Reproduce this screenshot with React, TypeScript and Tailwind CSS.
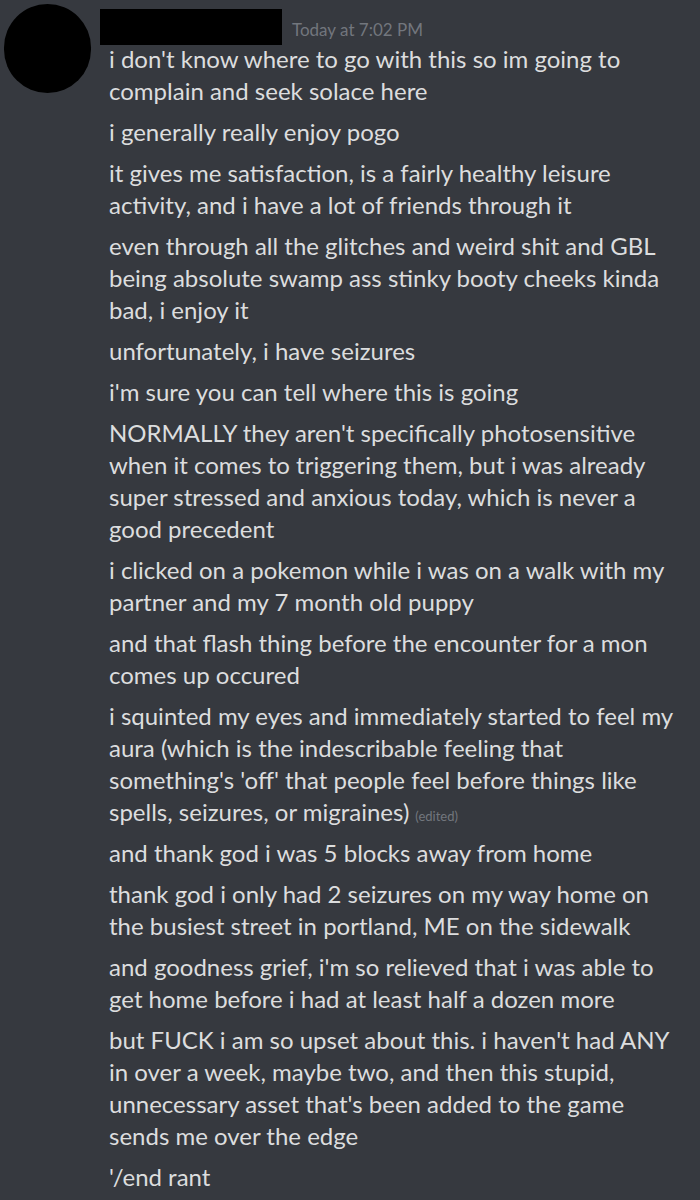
const paragraphs: string[][] = [
  ["i don't know where to go with this so im going to", "complain and seek solace here"],
  ["i generally really enjoy pogo"],
  ["it gives me satisfaction, is a fairly healthy leisure", "activity, and i have a lot of friends through it"],
  [
    "even through all the glitches and weird shit and GBL",
    "being absolute swamp ass stinky booty cheeks kinda",
    "bad, i enjoy it",
  ],
  ["unfortunately, i have seizures"],
  ["i'm sure you can tell where this is going"],
  [
    "NORMALLY they aren't specifically photosensitive",
    "when it comes to triggering them, but i was already",
    "super stressed and anxious today, which is never a",
    "good precedent",
  ],
  ["i clicked on a pokemon while i was on a walk with my", "partner and my 7 month old puppy"],
  ["and that flash thing before the encounter for a mon", "comes up occured"],
  [
    "i squinted my eyes and immediately started to feel my",
    "aura (which is the indescribable feeling that",
    "something's 'off' that people feel before things like",
    "spells, seizures, or migraines)",
  ],
  ["and thank god i was 5 blocks away from home"],
  ["thank god i only had 2 seizures on my way home on", "the busiest street in portland, ME on the sidewalk"],
  ["and goodness grief, i'm so relieved that i was able to", "get home before i had at least half a dozen more"],
  [
    "but FUCK i am so upset about this. i haven't had ANY",
    "in over a week, maybe two, and then this stupid,",
    "unnecessary asset that's been added to the game",
    "sends me over the edge",
  ],
  ["'/end rant"],
];

export default function App() {
  return (
    <div className="w-[700px] h-[1200px] overflow-hidden bg-[#36393f] font-['Lato',sans-serif] flex">
      {/* avatar */}
      <div className="w-[100px] shrink-0 pl-[4px] pt-[4px]">
        <div className="w-[87px] h-[89px] rounded-full bg-black" />
      </div>

      <div className="flex-1 min-w-0">
        <div className="h-[43px] flex items-start">
          <div className="w-[182px] h-[36px] mt-[9px] bg-black" />
          <span className="ml-[10px] mt-[20px] text-[17px] leading-[20px] text-[#72767d] whitespace-nowrap">
            Today at 7:02 PM
          </span>
        </div>

        <div className="pl-[9px] flex flex-col gap-[9px] text-[24px] leading-[32px] text-[#dcddde]">
          {paragraphs.map((lines, i) => (
            <div key={i}>
              {lines.map((line, j) => (
                <div key={j} className="h-[32px] whitespace-nowrap">
                  {line}
                  {i === 9 && j === lines.length - 1 && (
                    <span className="ml-[6px] text-[13px] leading-none text-[#72767d]">(edited)</span>
                  )}
                </div>
              ))}
            </div>
          ))}
        </div>
      </div>
    </div>
  );
}
